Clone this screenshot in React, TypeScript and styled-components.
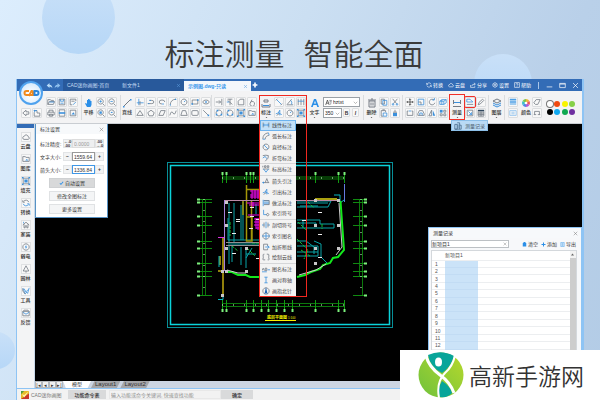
import React from "react";
import styled, { createGlobalStyle, css } from "styled-components";

const Global = createGlobalStyle`
  * { box-sizing: border-box; }
  html, body { margin: 0; padding: 0; }
  body, button, input, select {
    font-family: "Liberation Sans", "Noto Sans CJK SC", sans-serif;
    font-size: 5px;
    line-height: 8px;
    color: #333;
  }
  button, input, select { margin: 0; padding: 0; border: 0; border-radius: 0; background: none; outline: 0; }
  ul { margin: 0; padding: 0; list-style: none; }
`;

/* ---------- icons, drawn on a 10 x 10 grid ---------- */

const G = "#747b84";
const B = "#3b90dc";
const W = "#ffffff";
type Stroke = [string, string, boolean?];

const icons: Record<string, Stroke[]> = {
  undo: [["M1 5L5 1.500V4Q9 4 9 9Q8 6.500 5 6.500V8.500Z", "#b9dcf8", true]],
  redo: [["M9 5L5 1.500V4Q1 4 1 9Q2 6.500 5 6.500V8.500Z", "#8fc0ee", true]],
  open: [["M1 8V2H4L5 3H8V4.500M1 8L3 4.500H9.500L8 8Z", G], ["M3 5H9", B]],
  save: [["M1.500 1.500H8.500V8.500H1.500Z", G], ["M3 1.500V4H7V1.500M3 6.500H7", B]],
  saveas: [["M8.500 4V1.500H1.500V8.500H4M3 4H7", G], ["M5 8.500L8.500 5", B]],
  back: [["M5 1.500L1 5L5 8.500V6.500H8.500V3.500H5Z", G]],
  home: [["M1.500 4V9H8.500V5H5V2H1", G], ["M1 2H5M2 1V4", B]],
  print: [["M2.500 4V1.500H7.500V4M1 4H9V7.500H1ZM3 6.500H7V9H3Z", G]],
  pdf: [["M1.500 1H8.500V9H1.500Z", G], ["M1 4H9V6H1Z", B, true]],
  image: [["M1.500 1.500H8.500V8.500H1.500Z", G], ["M3 7L5.500 4L7.500 7Z", B, true]],
  hand: [["M3 9L1 5.500L2 5L3 6V2H4V5V1H5.200V5V1.500H6.400V5V3H7.500V7L6.500 9Z", "#2b8fe8", true]],
  zoomin: [["M4.500 1A3.300 3.300 0 1 0 4.510 1M7 7L9.500 9.500", G], ["M3 4.300H6M4.500 2.800V5.800", B]],
  zoomout: [["M4.500 1A3.300 3.300 0 1 0 4.510 1M7 7L9.500 9.500", G], ["M3 4.300H6", B]],
  zoomwin: [["M4.500 1A3.300 3.300 0 1 0 4.510 1M7 7L9.500 9.500", G], ["M3 3H6V6H3Z", B, true]],
  zoomall: [["M4.500 1A3.300 3.300 0 1 0 4.510 1M7 7L9.500 9.500", G], ["M3 5L5 3L6 5Z", B, true]],
  line: [["M1.500 8.500L8.500 1.500", G], ["M1 8H2.500V9.500H1ZM8 1H9.500V2.500H8Z", B, true]],
  axes: [["M3.500 1V9M1 6H9.500", B], ["M5 4V9", G]],
  poly: [["M1 7H6Q8.500 7 8.500 5Q8.500 3 6 3H3", G], ["M1 7H3M3 3H5", B]],
  ellipseArc: [["M8.500 5Q8.500 2.500 5 2.500Q1.500 2.500 1.500 5Q1.500 7.500 5 7.500", G], ["M5 7.500H7.500", B]],
  arc: [["M1.500 8.500Q2 2 8.500 1.500", G], ["M1 8H2.500V9.500H1ZM7.500 1H9V2.500H7.500Z", B, true]],
  circle: [["M5 1.300A3.700 3.700 0 1 0 5.010 1.300", G], ["M5 5L7 3", B]],
  rect: [["M1.500 2.500H8.500V7.500H1.500Z", G], ["M7.500 1.500H9.500V3.500H7.500ZM.5 6.500H2.500V8.500H.5Z", B, true]],
  ellipse: [["M5 2.500Q1.500 2.500 1 5Q1.500 7.500 5 7.500Q8.500 7.500 9 5Q8.500 2.500 5 2.500Z", G], ["M4 4H6V6H4Z", B, true]],
  triangle: [["M5 2L9 8H1Z", G]],
  pentagon: [["M5 1.500L9 4.500L7.500 8.500H2.500L1 4.500Z", G]],
  para: [["M3.500 2H9L6.500 8H1Z", G]],
  spline: [["M1 8Q3 1 5 5T9 2", G]],
  trap: [["M3 2H7L9 8H1Z", G]],
  round: [["M2.500 2H7.500Q9 2 9 3.500V6.500Q9 8 7.500 8H2.500Q1 8 1 6.500V3.500Q1 2 2.500 2Z", G]],
  ray: [["M1.500 1.500L8 8", G], ["M7 7H9V9H7Z", B, true]],
  extend: [["M8.500 1V9M1 5H7M5 3L7 5L5 7", G]],
  trim: [["M2 1.500H8M5 1.500V9M2 3L8 8", G], ["M1 5H4", B]],
  chamfer: [["M1.500 8.500V4L4 1.500H8.500V8.500Z", G]],
  mirror2: [["M2 8L5 2M3 8A2.500 2.500 0 0 0 8 8A2.500 2.500 0 0 0 3 6", G]],
  ring: [["M5 1.300A3.700 3.700 0 1 0 5.010 1.300", G], ["M2 1H4V3H2ZM7 6H9V8H7ZM1 6H3V8H1Z", B, true]],
  hatch: [["M1.500 1.500H8.500V8.500H1.500Z", G], ["M3 3H7V7H3ZM0 0H2V2H0ZM8 0H10V2H8ZM0 8H2V10H0ZM8 8H10V10H8Z", B, true]],
  gallery: [["M1 8V2H4L5 3H9V8Z", G], ["M4 7L6 5L8 7Z", B, true]],
  dim: [["M1.500 2V8M8.500 2V8", G], ["M1.500 5H8.500M3 4L1.800 5L3 6M7 4L8.200 5L7 6", B]],
  dimtext: [["M1 6V9H9V6M3 2H7V4H3Z", G], ["M2 7.500H8", B]],
  dimal: [["M2 2L8 8", B], ["M1 3L3 1M7 9L9 7", G]],
  angle: [["M1 8.500H9M1.500 8L7 1.500", G], ["M6 3Q8 5 7 8", B]],
  chain: [["M1.500 1V9M5 1V9M8.500 1V9", G], ["M1 4H9", B]],
  leader: [["M1 6L4 5L6 1.500V8M4 5L8.500 7", B], ["M2 8L5 6", G]],
  font: [["M1 9L4 1H6L9 9H7.300L6.600 7H3.400L2.700 9ZM4 5.500H6L5 2.700Z", "#2b8fe8", true]],
  script: [["M1 8.500L3.500 1.500L6 8.500M2 6H5", "#333"], ["M6 2H9M6 5L9 2L8 8", G]],
  trash: [["M2 3H8V9H2ZM1 2H9M4 1H6M4 4.500V7.500M6 4.500V7.500", G]],
  copy: [["M1.500 1.500H5.500V7.500H1.500Z", G], ["M3.500 3H8.500V9H3.500Z", B]],
  cut: [["M2 1L7 7M8 1L3 7", G], ["M2.500 7A1 1 0 1 0 2.600 7M7.500 7A1 1 0 1 0 7.600 7", B]],
  paste: [["M1.500 2H7V4M1.500 2V9H4M3 1H6", G], ["M4 5H8.500V9H4Z", B]],
  brush: [["M5 1V4M2.500 4H7.500", G], ["M2.500 5H7.500V9H2.500Z", B, true]],
  move: [["M5 1V9M1 5H9M3.800 2.200L5 1L6.200 2.200M3.800 7.800L5 9L6.200 7.800M2.200 3.800L1 5L2.200 6.200M7.800 3.800L9 5L7.800 6.200", "#444"]],
  scale: [["M1.500 1.500H8.500V8.500H1.500Z", B], ["M1.500 5H5V8.500", G]],
  rotate: [["M7.500 2.500A3.500 3.500 0 1 0 8.500 6", G], ["M5.500 2.500H8V0", B]],
  cube: [["M1 4L4 2H9V6L6 8H1Z", B], ["M1 4H6V8M6 4L9 2M3.500 2V8", B]],
  array: [["M3 2.500H1.500V8H8.500V2.500H7", G], ["M3.500 2.500H6.500", B]],
  offset: [["M1 8V6L3 2H7L9 6V8Z", G], ["M3.500 8V5H6.500V8", B]],
  flip: [["M4.500 1.500V8.500H1Z", G], ["M6 1.500L9 8.500H6Z", B, true]],
  blocks: [["M1 1H4.500V4.500H1Z", B, true], ["M6 1.500H8.500V4H6ZM6 6H8.500V8.500H6ZM1.500 6H4V8.500H1.500Z", G]],
  measure: [["M1.500 2V6M8.500 2V6M1 8.500H9", G], ["M2 4.500H8", B]],
  area: [["M1 5V1.500H5L8.500 5Z", B], ["M1 8H9", G]],
  pencil: [["M1.500 8.500L2.500 5.500L7 1.500L8.500 3L4 7.500Z", G]],
  matrix: [["M1.500 1.500H8.500V8.500H1.500Z", G], ["M3 3L7 7M7 4V7H4", B]],
  table: [["M1 1H9V3H1Z", "#30475e", true], ["M1.500 3V9H8.500V3M4 3V9M6 3V9M1 5H9M1 7H9", G]],
  layers: [["M5 1L9 3L5 5L1 3Z", G], ["M1 5L5 7L9 5M1 7L5 9L9 7", B]],
  lines: [["M1 1H9V3H1ZM1 4H9V6H1ZM1 7H9V8H1Z", "#4c9fe6", true]],
  style: [["M1 2H9V8H1ZM3 4H7M3 6H7", "#8bc0ee"]],
  erase: [["M1 6L4 2H9L6 8H3Z", G]],
  pick: [["M2 7V3H8V7M1 7H4M6 7H9", G]],
  sync: [["M8.500 4A3.700 3.700 0 0 0 2 3M1.500 6A3.700 3.700 0 0 0 8 7", W], ["M1 1.500V4H3.500M9 8.500V6H6.500", W]],
  syncg: [["M8.500 4A3.700 3.700 0 0 0 2 3M1 1.500V4H3.500", G], ["M1.500 6A3.700 3.700 0 0 0 8 7M9 8.500V6H6.500", B]],
  cloudw: [["M2.500 8Q.5 7.500 1 5.500Q1.500 4 3 4Q4 1.500 6 2.500Q7.500 3 7.500 4.500Q9.500 5 9 7Q8.500 8 7.500 8Z", W]],
  cloud: [["M2.500 8Q.5 7.500 1 5.500Q1.500 4 3 4Q4 1.500 6 2.500Q7.500 3 7.500 4.500Q9.500 5 9 7Q8.500 8 7.500 8Z", G]],
  share: [["M1 5V9H8V7M3 7Q3 3.500 8 3.500M6.500 1.500L9 3.500L6.500 5.500", W]],
  gear: [["M5 1L8.500 3V7L5 9L1.500 7V3ZM5 3.500A1.500 1.500 0 1 0 5.010 3.500", W]],
  help: [["M1 1H9V9H1ZM3.500 4Q3.500 2.500 5 2.500T6.500 4Q6.500 5 5 5.500V6M5 7V8", W]],
  house: [["M1 5L5 1.500L9 5M2.500 4V8.500H4V6H6V8.500H7.500V4", G], ["M2 1V3", B]],
  power: [["M5 1A4 4 0 1 0 5.010 1", G], ["M5.500 2L3.500 5.500H5L4.500 8L6.500 4.500H5Z", B, true]],
  tree: [["M5 1L8.500 7.500H1.500ZM5 7.500V9.500", G]],
  tools: [["M1 1.500L4 8.500L5.500 7L2.500 2M9 1L7 8L5 6L8 3", B], ["M1 2V5L4 9", G]],
  mail: [["M1 3H9V8.500H1ZM1 3L2.500 1.500H7.500L9 3", G], ["M1 4L5 6.500L9 4", B]],
  arcdim: [["M1 9Q1 2 8 1M4 9Q4 5 9 4", G], ["M1 9H4M8 1L9 4", B]],
  diameter: [["M5 1.300A3.700 3.700 0 1 0 5.010 1.300", G], ["M2.500 2.500L7.500 7.500", B]],
  bend: [["M1 2Q5 1 8 2Q9 5 4 9", G], ["M1 5L4 3L6 6", B]],
  level: [["M1 1V3M3 1H5V3H3ZM6.500 1H8.500V3H6.500ZM1 5H9", G], ["M2 5L5 9L8 5", B]],
  arrow: [["M1 7H9M4 7L6 2L8 7", G], ["M0 7L2.500 5.500V8.500Z", B, true]],
  method: [["M2 2H9M2 4H9M2 6H9M1.500 1V9", B], ["M2.500 2H9V7H2.500", G]],
  index: [["M2 1V7H6", B], ["M7 5.500A1.500 1.500 0 1 0 7.100 5.500", G]],
  section: [["M0 5H3M7 5H10M5 1V9", B], ["M2.500 2V8M7.500 2V8", G]],
  indexname: [["M5 1A4 4 0 1 0 5.010 1", G], ["M0 5H10M5 1V9", B]],
  breakline: [["M2 1.500H7V4M2 1.500V8.500H7V7", G], ["M4 5H9M7 3.500L9 5L7 7", B]],
  revcloud: [["M3 1.500H2Q1 2 1.500 4T1 8Q2 9 4 8.500M6 1.500H8Q9 2 8.500 4T9 8Q8 9 7 8.500", G]],
  caption: [["M0 7L1.500 4L3 7M4 4V7H6V4Z", G], ["M7 6H10M0 8.500H6", B]],
  axis: [["M3 1.500H7M3 8.500H7", B], ["M5 1.500V8.500", B]],
  north: [["M5 1A4 4 0 1 0 5.010 1", G], ["M5 0L7 9L5 7.500L3 9Z", "#1d63b5", true]],
  building: [["M1 3H4V9H1ZM4 1H7V9M7 4H9V9H1M5 3V8", "#4a6c8c"]],
  bin: [["M1.500 2H8.500V9H1.500ZM3 0H7V2H3Z", "#2b8fe8", true]],
  plus: [["M4 1H6V4H9V6H6V9H4V6H1V4H4Z", "#2b8fe8", true]],
  sheet: [["M1.500 1H8.500V9H1.500ZM3 3H7M3 5H7M3 7H7", "#3f9cea"]],
  close: [["M1.500 1.500L8.500 8.500M8.500 1.500L1.500 8.500", "#777"]],
  closeb: [["M2 2L8 8M8 2L2 8", "#5d9fdf"]],
  closew: [["M1.500 1.500L8.500 8.500M8.500 1.500L1.500 8.500", W]],
  min: [["M1 7H9", W]],
  max: [["M1 2H9V8H1ZM1 3H9", W]],
  addw: [["M4 2H6V4H8V6H6V8H4V6H2V4H4Z", W, true]],
  check: [["M1 5L4 8L9 2L7.500 1L4 5.500L2.500 4Z", "#2b8fe8", true]],
  down: [["M1.500 3.500L5 7L8.500 3.500", "#777"]],
  caret: [["M2 3H8L5 7Z", "#444", true]],
  up: [["M2 7H8L5 3Z", "#666", true]],
};

const Svg = styled.svg`
  display: block;
  flex: none;
`;

function Icon({ n, s = 8 }: { n: string; s?: number }) {
  return (
    <Svg width={s} height={s} viewBox="0 0 10 10" aria-hidden="true">
      {icons[n].map(([d, c, fill], i) => (
        <path key={i} d={d} fill={fill ? c : "none"} stroke={fill ? "none" : c} strokeWidth={1} />
      ))}
    </Svg>
  );
}

/* ---------- page ---------- */

const Page = styled.div`
  position: relative;
  height: 100vh;
  overflow: hidden;
  display: flex;
  flex-direction: column;
  background: linear-gradient(115deg, #dcedfd 0%, #cbdff2 40%, #b9d0e9 75%, #b3cce6 100%);
`;

const Bubble = styled.div<{ $x: string; $y: number; $d: number }>`
  position: absolute;
  left: ${(p) => p.$x};
  top: ${(p) => p.$y}px;
  width: ${(p) => p.$d}px;
  height: ${(p) => p.$d}px;
  border-radius: 50%;
  background: linear-gradient(180deg, #c9e0f8, #b6d7f7);
`;

const Headline = styled.h1`
  position: relative;
  flex: none;
  height: 79px;
  margin: 0;
  padding: 27px 12px 0 0;
  display: flex;
  justify-content: center;
  gap: 19px;
  font: 350 30px/50px "Noto Sans CJK SC", sans-serif;
  color: #3a3a3a;
`;

const Frame = styled.div`
  position: relative;
  flex: 1;
  min-height: 0;
  margin: 0 16px;
  display: flex;
  flex-direction: column;
  border: solid #8ec4f4;
  border-width: 0 2px 0 1px;
  background: #f1f2f4;
`;

const TitleBar = styled.header`
  flex: none;
  height: 12px;
  display: flex;
  align-items: center;
  padding-left: 27px;
  background: #336cb6;
  color: #fff;
`;

const BareButton = styled.button`
  flex: none;
  display: flex;
  align-items: center;
  justify-content: center;
  gap: 1px;
  color: inherit;
`;

const History = styled.div`
  flex: none;
  width: 19px;
  display: flex;
  align-items: center;
  justify-content: space-evenly;
`;

const Tab = styled.div<{ $w: number; $active?: boolean }>`
  flex: none;
  width: ${(p) => p.$w}px;
  height: 12px;
  padding: 0 3px 0 4px;
  display: flex;
  align-items: center;
  justify-content: space-between;
  background: #28599b;
  color: #c5dcf4;
  ${(p) =>
    p.$active &&
    css`
      height: 10px;
      align-self: flex-end;
      background: #f4f7fb;
      color: #3a98ec;
      font-weight: 700;
    `}
`;

const TitleTools = styled.nav`
  flex: 1;
  display: flex;
  justify-content: flex-end;
  gap: 5px;
  padding-right: 7px;
  font-weight: 500;
`;

const WindowTools = styled.div`
  flex: none;
  display: flex;
  align-items: center;
  gap: 6px;
  padding: 0 3px 0 7px;
  border-left: 1px solid #a9c6e8;
`;

const Logo = styled.div`
  position: absolute;
  left: 2px;
  top: 2px;
  width: 24px;
  height: 24px;
  border-radius: 50%;
  border: 2px solid #4fa2ee;
  background: radial-gradient(circle at 50% 60%, #fff 10%, #cfe6fb 90%);
  display: flex;
  align-items: center;
  justify-content: center;
`;

/* ---------- toolbar ---------- */

const Toolbar = styled.div`
  flex: none;
  height: 33px;
  display: flex;
  align-items: stretch;
  padding: 6px 0 4px;
  border-bottom: 1px solid #c9cdd2;
  background: #f3f3f4;
`;

const Grid = styled.div<{ $w: number; $n: number; $ml?: number }>`
  flex: none;
  width: ${(p) => p.$w}px;
  margin-left: ${(p) => p.$ml ?? 1}px;
  display: grid;
  grid-template-columns: repeat(${(p) => p.$n}, 1fr);
  grid-template-rows: 11px 11px;
`;

const Tool = styled.button<{ $marked?: boolean }>`
  margin: 0 1px 1px 0;
  display: flex;
  align-items: center;
  justify-content: center;
  border: 1px solid #dcdee0;
  border-radius: 1px;
  background: #f8f8f8;
  ${(p) =>
    p.$marked &&
    css`
      outline: 1px solid #f03028;
    `}
`;

const Tall = styled.button<{ $w: number; $ml?: number; $marked?: boolean }>`
  flex: none;
  width: ${(p) => p.$w}px;
  margin-left: ${(p) => p.$ml ?? 1}px;
  padding-top: 1px;
  display: flex;
  flex-direction: column;
  align-items: center;
  font-weight: 500;
  ${(p) =>
    p.$marked &&
    css`
      outline: 1px solid #f03028;
      margin-top: -2px;
      padding-top: 3px;
    `}
`;

const Divider = styled.span<{ $ml?: number }>`
  flex: none;
  width: 1px;
  margin: -2px 0 -1px ${(p) => p.$ml ?? 1}px;
  background: #dadcde;
`;

const Fonts = styled.div`
  flex: none;
  width: 37px;
  margin-left: 2px;
  display: grid;
  grid-template-columns: 19px 8px 8px;
  grid-template-rows: 10px 10px;
  gap: 1px;
`;

const SelectBox = styled.label<{ $wide?: boolean }>`
  grid-column: ${(p) => (p.$wide ? "1 / -1" : "auto")};
  display: flex;
  align-items: center;
  gap: 1px;
  padding: 0 1px;
  border: 1px solid #9aa0a6;
  background: #fff;
`;

const Select = styled.select`
  flex: 1;
  min-width: 0;
  appearance: none;
  color: #222;
`;

const Palette = styled.div`
  flex: none;
  width: 30px;
  margin-left: 3px;
  display: grid;
  grid-template-columns: repeat(4, 1fr);
  grid-template-rows: 8px 8px;
  align-content: center;
  justify-items: center;
  align-items: center;
`;

const Swatch = styled.button<{ $c: string }>`
  width: 6px;
  height: 6px;
  border-radius: 50%;
  background: ${(p) => p.$c};
  box-shadow: ${(p) => (p.$c === "#ffffff" ? "0 0 0 1px #777" : "none")};
`;

/* ---------- body ---------- */

const Body = styled.div`
  flex: 1;
  min-height: 0;
  display: flex;
`;

const Side = styled.nav`
  flex: none;
  width: 18px;
  display: grid;
  grid-template-rows: 4px repeat(9, 1fr) 67px;
  border-right: 1px solid #c8d8e8;
  background: #f3f4f5;
`;

const SideCap = styled.span`
  background: #336cb6;
`;

const SideButton = styled.button`
  padding-top: 4px;
  display: flex;
  flex-direction: column;
  align-items: center;
  justify-content: flex-start;
  font-weight: 500;
`;

const IconBox = styled.span`
  width: 10px;
  height: 10px;
  display: flex;
  align-items: center;
  justify-content: center;
  border: 1px solid #dfe1e3;
  background: #f8f8f8;
`;

const Main = styled.main`
  flex: 1;
  min-width: 0;
  display: flex;
  flex-direction: column;
`;

const Canvas = styled.div`
  flex: 1;
  min-height: 0;
  background: #000;
`;

const Plan = styled.svg`
  display: block;
  width: 100%;
  height: 100%;
`;

const Sheets = styled.div`
  flex: none;
  height: 7px;
  display: flex;
  background: #ccd5e2;
`;

const SheetNav = styled.button`
  width: 7px;
  display: flex;
  align-items: center;
  justify-content: center;
  border: 1px solid #b4b8bc;
  background: #f0f0f0;
`;

const SheetTab = styled.button<{ $active?: boolean }>`
  height: 7px;
  padding: 0 ${(p) => (p.$active ? 9 : 4)}px;
  font-size: ${(p) => (p.$active ? 5 : 6)}px;
  line-height: 7px;
  clip-path: polygon(${(p) => (p.$active ? "0 0, 100% 0, 88% 100%, 10% 100%" : "12% 0, 100% 0, 88% 100%, 0 100%")});
  background: ${(p) => (p.$active ? "#fff" : "#a5a6aa")};
`;

const Status = styled.footer`
  flex: none;
  height: 12px;
  padding: 1px 0 1px 4px;
  display: flex;
  align-items: center;
  border-top: 1px solid #8ec4f4;
  background: #f2f2f2;
  color: #777;
`;

const StatusName = styled.span`
  flex: none;
  width: 39px;
  padding-left: 2px;
`;

const StatusButton = styled.button<{ $w: number }>`
  flex: none;
  width: ${(p) => p.$w}px;
  height: 9px;
  background: #d9dadb;
  font-weight: 500;
`;

const Command = styled.input`
  width: 112px;
  height: 9px;
  margin-left: 3px;
  padding-left: 1px;
  border: 1px solid #e8e8e8;
  &::placeholder { color: #8c8c8c; opacity: 1; }
`;

/* ---------- floating pieces ---------- */

const Settings = styled.section`
  position: absolute;
  left: 18px;
  top: 45px;
  width: 73px;
  height: 94px;
  display: flex;
  flex-direction: column;
  border: solid #5792c4;
  border-width: 0 1px 1px;
  background: #fff;
`;

const PanelHead = styled.div`
  flex: none;
  height: 10px;
  padding: 0 3px 0 4px;
  display: flex;
  align-items: center;
  justify-content: space-between;
  background: #f7f9fb;
`;

const Fields = styled.div`
  padding-top: 3px;
`;

const Field = styled.div`
  height: 13px;
  padding: 0 3px 0 4px;
  display: grid;
  grid-template-columns: 23px 9px 23px 9px;
  align-items: center;
`;

const Step = styled.button`
  height: 9px;
  border: 1px solid #e2e4e6;
  background: #f2f3f4;
  font-weight: 700;
  line-height: 7px;
`;

const Small = styled.span`
  display: block;
  font-size: 4px;
  line-height: 4px;
`;

const Value = styled.input<{ $state?: "off" | "focus" }>`
  width: 100%;
  height: 9px;
  padding-left: 1px;
  border: 1px solid ${(p) => (p.$state === "off" ? "#ddd" : p.$state === "focus" ? "#3f97e6" : "#999")};
  background: ${(p) => (p.$state === "off" ? "#eeeff0" : "#fff")};
  color: ${(p) => (p.$state === "off" ? "#999" : "#333")};
`;

const Actions = styled.div`
  padding: 2px 12px 0 13px;
  display: grid;
  gap: 3px;
`;

const Action = styled.button<{ $on?: boolean }>`
  height: 10px;
  display: flex;
  align-items: center;
  justify-content: center;
  gap: 1px;
  border: 1px solid ${(p) => (p.$on ? "#cfd1d3" : "#e0e2e4")};
  background: ${(p) => (p.$on ? "#d8d9da" : "#f4f5f6")};
`;

const RedFrame = styled.div`
  position: absolute;
  left: 242px;
  top: 16px;
  width: 48px;
  height: 202px;
  border: 1px solid #f02820;
  pointer-events: none;
`;

const Menu = styled.ul`
  position: absolute;
  left: 243px;
  top: 41px;
  width: 36px;
  height: 176px;
  display: flex;
  flex-direction: column;
  background: #f3f3f3;
`;

const MenuItem = styled.li<{ $on?: boolean; $line?: boolean }>`
  flex: 1;
  display: flex;
  border-bottom: ${(p) => (p.$line ? "1px solid #d5d6d8" : "0")};
  ${(p) =>
    p.$on &&
    css`
      background: #c2e0f8;
      box-shadow: inset 0 0 0 1px #6db3ee;
    `}
`;

const MenuButton = styled.button`
  flex: 1;
  display: flex;
  align-items: center;
  gap: 2px;
  padding-left: 2px;
  color: #444;
`;

const RecordTip = styled.button`
  position: absolute;
  left: 434px;
  top: 41px;
  width: 37px;
  height: 11px;
  display: flex;
  align-items: center;
  gap: 3px;
  padding-left: 2px;
  border: 1px solid #8cbfe8;
  background: #b9daf5;
  color: #4a5a6a;
`;

const Records = styled.section`
  position: absolute;
  right: 0;
  top: 148px;
  bottom: 0;
  width: 154px;
  display: flex;
  flex-direction: column;
  border: 1px solid #8ec4f4;
  background: #f7f8fa;
`;

const RecordTools = styled.div`
  flex: none;
  height: 12px;
  padding: 0 5px 0 2px;
  display: flex;
  align-items: center;
  gap: 3px;
`;

const ProjectBox = styled.label`
  width: 78px;
  height: 8px;
  margin-right: auto;
  padding-right: 1px;
  display: flex;
  align-items: center;
  border: 1px solid #bcc0c4;
  background: #fff;
`;

const ProjectInput = styled.input`
  flex: 1;
  min-width: 0;
  height: 6px;
`;

const Scroller = styled.div`
  flex: 1;
  min-height: 0;
  margin: 0 4px 0 2px;
  display: flex;
  align-items: flex-start;
  overflow: hidden;
  border: 1px solid #d4d8dc;
  background: #fff;
`;

const Table = styled.table`
  flex: 1;
  height: 106px;
  table-layout: fixed;
  border-collapse: collapse;
  line-height: 6px;
  th, td {
    padding: 0;
    border-bottom: 1px solid #eceef0;
    font-weight: 400;
    text-align: left;
    color: #555;
  }
  thead th { height: 9px; }
  tbody th { padding-left: 3px; }
  tbody td:nth-child(2) { background: #cbe3f8; border-color: #c2dcf4; }
`;

const Col = styled.col<{ $w?: number }>`
  width: ${(p) => (p.$w ? `${p.$w}px` : "auto")};
`;

const ScrollBar = styled.div`
  flex: none;
  width: 6px;
  align-self: stretch;
  padding-top: 1px;
  background: linear-gradient(#f2f2f2 7px, #cdcdcd 7px);
`;

const Brand = styled.div`
  position: absolute;
  right: 0;
  bottom: 0;
  width: 200px;
  height: 50px;
  padding-left: 18px;
  display: flex;
  align-items: center;
  gap: 5px;
  background: #fff;
  color: #333;
  font: 350 23px/48px "Noto Sans CJK SC", sans-serif;
`;

/* ---------- data ---------- */

const draw = ["axes", "poly", "ellipseArc", "arc", "circle", "rect", "ellipse", "triangle", "pentagon", "para", "spline", "trap", "round", "ray"];
const modify = ["extend", "trim", "chamfer", "mirror2", "ring", "ring", "hatch", "gallery"];
const dims = ["dimal", "angle", "chain", "leader", "circle", "hatch"];
const clip = ["copy", "cut", "paste", "brush"];
const edit = ["move", "scale", "rotate", "cube", "array", "offset", "flip", "blocks"];
const colors = ["#ffffff", "#f04a10", "#f8f400", "#86d048", "#000000", "#10a8f0", "#10a850", "#7030a0"];
const side: [string, string][] = [
  ["cloud", "云盘"], ["gallery", "图库"], ["hatch", "填充"], ["syncg", "转换"], ["house", "家装"],
  ["power", "弱电"], ["tree", "园林"], ["tools", "工具"], ["mail", "反馈"],
];
const menu: [string, string, boolean?][] = [
  ["dim", "线性标注"], ["arcdim", "弧长标注"], ["diameter", "直径标注"], ["bend", "折弯标注", true],
  ["level", "标高标注", true],
  ["arrow", "箭头引注"], ["leader", "引出标注"], ["method", "做法标注"], ["index", "索引符号", true],
  ["section", "剖切符号"], ["indexname", "索引图名"], ["breakline", "加折断线"], ["revcloud", "绘制云线", true],
  ["caption", "图名标注"], ["axis", "画对称轴"], ["north", "画指北针"],
];

function Tools({ list, marked }: { list: string[]; marked?: number }) {
  return (
    <>
      {list.map((n, i) => (
        <Tool key={i} aria-label={n} $marked={i === marked}>
          <Icon n={n} />
        </Tool>
      ))}
    </>
  );
}

/* ---------- floor plan ---------- */

const topX = [222, 226, 246, 250, 253, 315, 338, 344];
const bottomX = [222, 226, 246, 253, 261, 268, 276, 284, 292, 315, 338, 344];
const sideY = [199, 202, 216, 225, 241, 248, 263, 271, 276, 295];

function FloorPlan() {
  const ticks = (xs: number[], a: number, b: number, dot: number) =>
    xs.map((x) => (
      <React.Fragment key={x}>
        <path d={`M${x}.500 ${a}V${b}`} stroke="#129a12" />
        <rect x={x - 0.5} y={dot} width="2" height="3" fill="#7cf07c" />
      </React.Fragment>
    ));
  const rungs = (a: number, b: number, dot: number) =>
    sideY.map((y) => (
      <React.Fragment key={y}>
        <path d={`M${a} ${y}.500H${b}`} stroke="#108a10" />
        <rect x={dot} y={y - 0.5} width="3" height="2" fill="#7cf07c" />
      </React.Fragment>
    ));
  const columns = [[225, 201], [225, 224], [225, 247], [225, 270], [245, 247], [245, 270], [314, 199], [337, 199], [314, 224], [337, 224], [314, 247], [337, 247], [314, 262], [221, 294], [221, 270]];
  const marks = [[228, 212], [236, 219], [236, 221], [250, 207], [250, 216], [256, 219], [232, 233], [232, 253], [318, 212], [318, 234], [318, 257], [249, 228], [256, 258], [302, 220]];
  return (
    <Plan viewBox="35 124 547 257" fill="none" strokeWidth="1" role="img" aria-label="平面图">
      <rect x="167.500" y="162.500" width="225" height="165" stroke="#078f98" />
      <rect x="170.500" y="165.500" width="219" height="159" stroke="#0bd3da" strokeWidth="1.500" />
      <path d="M222 177H345M222 179H345M222 303.500H345M222 306.500H345" stroke="#0c780c" />
      <path d="M202.500 199V295M205.500 199V295M359.500 199V276M362.500 199V295" stroke="#0c780c" />
      {ticks(topX, 173, 183, 172)}
      {ticks(bottomX, 300, 310, 309)}
      {rungs(199, 212, 197)}
      {rungs(353, 366, 364)}
      <path d="M222 178H345M222 305H345M204 199V295M361 199V295" stroke="#d8ffd8" strokeDasharray="1 10" />
      <path d="M229 203V242M234 203V243M241 205V240M243 202V240M228 240H262M228 244H262M229 245V264M232 246V262M241 247V265M246 247V268M228 218V240M246 254H256M256 204V214M252 248L246 258" stroke="#08a4a8" />
      <path d="M297 201H331L328 207H297M297 203H328M297 220H320V224H334V228H297M297 223H316V227M300 206H318M297 241H306L314 247V254M297 246H318V256H297M314 241L321 244V257L327 263M297 252H318M303 220V228" stroke="#08a4a8" />
      <path d="M230 222V236M232 246L238 251M247 248L255 256M252 243H260M298 222L306 230M297 239L308 250L304 259M308 202L314 208M301 250L310 256M322 224V229" stroke="#15bd32" strokeDasharray="3 1" />
      <path d="M226 242.500H262M226 245.500H262" stroke="#909090" />
      <path d="M246.500 185V241H252V217H247M251.500 200V240M246 189.500H260M243 201V215" stroke="#a39608" strokeWidth="1.500" />
      <path d="M224 200.500H340" stroke="#bd8ca8" />
      <path d="M224.500 200V271" stroke="#a780db" />
      <path d="M315 199H337" stroke="#aaa010" strokeWidth="2" />
      <path d="M218 237.500H224" stroke="#db30db" />
      <path d="M223 238V297M220 256V265M218 271H224" stroke="#91800b" strokeWidth="2" />
      <path d="M219 256V267M218 299.500H223V294" stroke="#08b7c0" />
      <path d="M344.500 184V202" stroke="#6679df" />
      <path d="M334 195H340V203L344 200" stroke="#08b7c0" />
      <path d="M340.500 201L344 250L338 257L333 258L330 263L323 265L320 269L311 272L305 275L297 277" stroke="#13e71c" strokeWidth="2" />
      <path d="M339 203L342 247L336 255M326 264L316 270L299 275" stroke="#ccc" />
      <path d="M225 272L232 272L238 275H246L250 277H262" stroke="#13e71c" strokeWidth="2" />
      <path d="M227 270L238 273H246" stroke="#ccc" />
      <path d="M250 191H260M252 193H260M250 195H260M250 197H260M252 190V199M255 190V199M258 190V199M247 203H260M249 205H260M253 202V208M258 218V230M254 219H260M254 222H260M254 225H260M256 228H260M256 218V229M248 215H260" stroke="#f00af0" />
      {columns.map(([x, y], i) => <rect key={i} x={x} y={y} width="3" height="3" fill="#c8c8c8" />)}
      {marks.map(([x, y], i) => <rect key={i} x={x} y={y} width="4" height="1" fill="#eee" />)}
      <text x="267" y="319" fill="#f5f000" fontSize="4" fontWeight="700">底层平面图</text>
      <text x="288" y="319" fill="#f5f000" fontSize="3">1:100</text>
      <path d="M265 320.500H296" stroke="#f5f000" />
    </Plan>
  );
}

export default function App() {
  return (
    <Page lang="zh-CN">
      <Global />
      <Bubble $x="42px" $y={-19} $d={73} />
      <Bubble $x="79%" $y={54} $d={58} />
      <Bubble $x="-22px" $y={332} $d={37} />
      <Headline>
        <span>标注测量</span>
        <span>智能全面</span>
      </Headline>
      <Frame>
        <TitleBar>
          <History>
            <BareButton aria-label="撤销"><Icon n="undo" s={7} /></BareButton>
            <BareButton aria-label="重做"><Icon n="redo" s={7} /></BareButton>
          </History>
          <Tab $w={55}>CAD迷你画图-首页</Tab>
          <Tab $w={66}>新文件1<Icon n="closeb" s={5} /></Tab>
          <Tab $w={67} $active>示例图.dwg-只读<Icon n="closeb" s={5} /></Tab>
          <BareButton aria-label="新建"><Icon n="addw" s={8} /></BareButton>
          <TitleTools>
            {[["sync", "转换"], ["cloudw", "云盘"], ["share", "分享"], ["gear", "设置"], ["help", "帮助"]].map(([i, t]) => (
              <BareButton key={t}><Icon n={i} s={6} />{t}</BareButton>
            ))}
          </TitleTools>
          <WindowTools>
            <BareButton aria-label="最小化"><Icon n="min" s={7} /></BareButton>
            <BareButton aria-label="最大化"><Icon n="max" s={7} /></BareButton>
            <BareButton aria-label="关闭"><Icon n="closew" s={7} /></BareButton>
          </WindowTools>
        </TitleBar>
        <Toolbar>
          <Grid $w={21} $n={2} $ml={4}>
            <span /><span />
            <Tools list={["back", "home"]} />
          </Grid>
          <Grid $w={32} $n={3} $ml={4}><Tools list={["open", "save", "saveas", "print", "pdf", "image"]} /></Grid>
          <Divider $ml={3} />
          <Tall $w={13} $ml={0}><Icon n="hand" s={10} />平移</Tall>
          <Grid $w={21} $n={2}><Tools list={["zoomin", "zoomout", "zoomwin", "zoomall"]} /></Grid>
          <Divider $ml={3} />
          <Tall $w={12} $ml={0}><Icon n="line" s={10} />直线</Tall>
          <Grid $w={75} $n={7} $ml={2}><Tools list={draw} /></Grid>
          <Divider />
          <Grid $w={43} $n={4} $ml={2}><Tools list={modify} /></Grid>
          <Tall $w={14} $ml={2}><Icon n="dimtext" s={10} />标注<Icon n="caret" s={3} /></Tall>
          <Grid $w={32} $n={3}><Tools list={dims} /></Grid>
          <Tall $w={13} $ml={2}><Icon n="font" s={10} />文字<Icon n="caret" s={3} /></Tall>
          <Fonts>
            <SelectBox $wide>
              <Icon n="script" s={7} />
              <Select aria-label="字体" defaultValue="hztxt"><option>hztxt</option></Select>
              <Icon n="down" s={5} />
            </SelectBox>
            <SelectBox>
              <Select aria-label="字号" defaultValue="350"><option>350</option></Select>
              <Icon n="down" s={5} />
            </SelectBox>
            <Tool><b>B</b></Tool>
            <Tool><b><i>I</i></b></Tool>
          </Fonts>
          <Divider $ml={3} />
          <Tall $w={13}><Icon n="trash" s={10} />删除<Icon n="caret" s={3} /></Tall>
          <Grid $w={22} $n={2}><Tools list={clip} /></Grid>
          <Divider />
          <Grid $w={43} $n={4} $ml={2}><Tools list={edit} /></Grid>
          <Tall $w={14} $ml={2} $marked><Icon n="measure" s={10} />测量<Icon n="caret" s={3} /></Tall>
          <Grid $w={22} $n={2}><Tools list={["area", "pencil", "matrix", "table"]} marked={0} /></Grid>
          <Divider />
          <Tall $w={13}><Icon n="layers" s={10} />图层<Icon n="caret" s={3} /></Tall>
          <Divider />
          <Grid $w={11} $n={1} $ml={3}><Tools list={["lines", "style"]} /></Grid>
          <Tall $w={12}>
            <Svg width="10" height="10" viewBox="0 0 10 10" aria-hidden="true">
              {["#f2b33c", "#ee5a5a", "#b75ad0", "#4f86e8", "#3cc0c8", "#7cc84a"].map((c, i) => (
                <path key={c} d="M5 5L5 1A4 4 0 0 1 8.460 3Z" fill={c} transform={`rotate(${i * 60} 5 5)`} />
              ))}
              <circle cx="5" cy="5" r="1.300" fill="#fff" />
            </Svg>
            颜色
          </Tall>
          <Grid $w={11} $n={1} $ml={0}><Tools list={["erase", "pick"]} /></Grid>
          <Palette>{colors.map((c) => <Swatch key={c} $c={c} aria-label={c} />)}</Palette>
        </Toolbar>
        <Body>
          <Side>
            <SideCap />
            {side.map(([i, t]) => (
              <SideButton key={t}><IconBox><Icon n={i} /></IconBox>{t}</SideButton>
            ))}
          </Side>
          <Main>
            <Canvas><FloorPlan /></Canvas>
            <Sheets>
              {["|◂", "◂", "▸", "▸|"].map((t) => <SheetNav key={t}>{t}</SheetNav>)}
              <SheetTab $active>模型</SheetTab>
              <SheetTab>Layout1</SheetTab>
              <SheetTab>Layout2</SheetTab>
            </Sheets>
          </Main>
        </Body>
        <Status>
          <Svg width="8" height="8" viewBox="0 0 10 10" aria-hidden="true">
            <path d="M0 0H10V10H0Z" fill="#e8ba28" />
            <path d="M0 10L10 3V10Z" fill="#c9352b" />
            <path d="M1 4L4 8L10 0L4 5Z" fill="#fff1a8" />
            <path d="M0 0H4L0 4Z" fill="#4d9d3c" />
          </Svg>
          <StatusName>CAD迷你画图</StatusName>
          <StatusButton $w={38}>功能命令表</StatusButton>
          <Command aria-label="命令" placeholder="输入功能或命令关键词, 快速查找功能" />
          <StatusButton $w={32}>确定</StatusButton>
        </Status>

        <Logo>
          <Svg width="17" height="8" viewBox="0 0 34 16" fill="none" strokeWidth="4" aria-hidden="true">
            <path d="M12 4H7Q3 4 3 8T7 12H12" stroke="#f28a1c" />
            <path d="M12 14L17 4Q20 3 20 7V12H14" stroke="#f28a1c" />
            <path d="M23 12V4H27Q31 4 31 8T27 12Z" stroke="#2b86dc" />
          </Svg>
        </Logo>

        <Settings>
          <PanelHead>标注设置<BareButton aria-label="关闭"><Icon n="close" s={5} /></BareButton></PanelHead>
          <Fields>
            <Field>
              <label htmlFor="precision">标注精度:</label>
              <Step aria-label="减少小数位"><Small>←.0</Small><Small>.00</Small></Step>
              <Value id="precision" $state="off" defaultValue="0.0000" />
              <Step aria-label="增加小数位"><Small>.00</Small><Small>→.0</Small></Step>
            </Field>
            <Field>
              <label htmlFor="textsize">文字大小:</label>
              <Step>−</Step>
              <Value id="textsize" defaultValue="1559.64" />
              <Step>+</Step>
            </Field>
            <Field>
              <label htmlFor="arrowsize">箭头大小:</label>
              <Step>−</Step>
              <Value id="arrowsize" $state="focus" defaultValue="1336.84" />
              <Step>+</Step>
            </Field>
          </Fields>
          <Actions>
            <Action $on><Icon n="check" s={5} />自动设置</Action>
            <Action>修改全图标注</Action>
            <Action>更多设置</Action>
          </Actions>
        </Settings>

        <Menu>
          {menu.map(([i, t, line], k) => (
            <MenuItem key={t} $on={k === 0} $line={line}>
              <MenuButton><Icon n={i} s={8} />{t}</MenuButton>
            </MenuItem>
          ))}
        </Menu>
        <RedFrame />
        <RecordTip><Icon n="building" s={8} />测量记录</RecordTip>

        <Records>
          <PanelHead>测量记录<BareButton aria-label="关闭"><Icon n="close" s={5} /></BareButton></PanelHead>
          <RecordTools>
            <ProjectBox>
              <ProjectInput aria-label="项目" defaultValue="新项目1" />
              <Icon n="close" s={4} />
            </ProjectBox>
            <BareButton><Icon n="bin" s={5} />清空</BareButton>
            <BareButton><Icon n="plus" s={5} />添加</BareButton>
            <BareButton><Icon n="sheet" s={5} />导出</BareButton>
          </RecordTools>
          <Scroller>
            <Table>
              <colgroup><Col $w={13} /><Col $w={33} /><Col /></colgroup>
              <thead><tr><th /><th>新项目1</th><th /></tr></thead>
              <tbody>
                {Array.from({ length: 13 }, (_, i) => (
                  <tr key={i}><th>{i + 1}</th><td /><td /></tr>
                ))}
              </tbody>
            </Table>
            <ScrollBar><Icon n="up" s={5} /></ScrollBar>
          </Scroller>
        </Records>
      </Frame>

      <Brand>
        <Svg width="46" height="46" viewBox="0 0 46 46" aria-hidden="true">
          <defs>
            <linearGradient id="leaf" x1="0" y1="1" x2="1" y2="0">
              <stop offset="0" stopColor="#6fc13c" />
              <stop offset="1" stopColor="#b8d92c" />
            </linearGradient>
          </defs>
          <circle cx="23" cy="23" r="22.500" fill="url(#leaf)" />
          <path d="M10 3Q23 -3 36 4Q33 15 24 21Q12 15 10 3Z" fill="#08a59a" />
          <path d="M24 29Q19 37 22 45Q30 46 34 41Q32 34 24 29Z" fill="#08a59a" />
          <path d="M8 4Q11 15 22 23Q32 30 36 41" fill="none" stroke="#fff" strokeWidth="3" />
          <path d="M37 3Q35 14 27 21Q18 30 21 46" fill="none" stroke="#fff" strokeWidth="2" />
          <ellipse cx="20.500" cy="10" rx="3.500" ry="4.500" fill="#fff" />
        </Svg>
        高新手游网
      </Brand>
    </Page>
  );
}
